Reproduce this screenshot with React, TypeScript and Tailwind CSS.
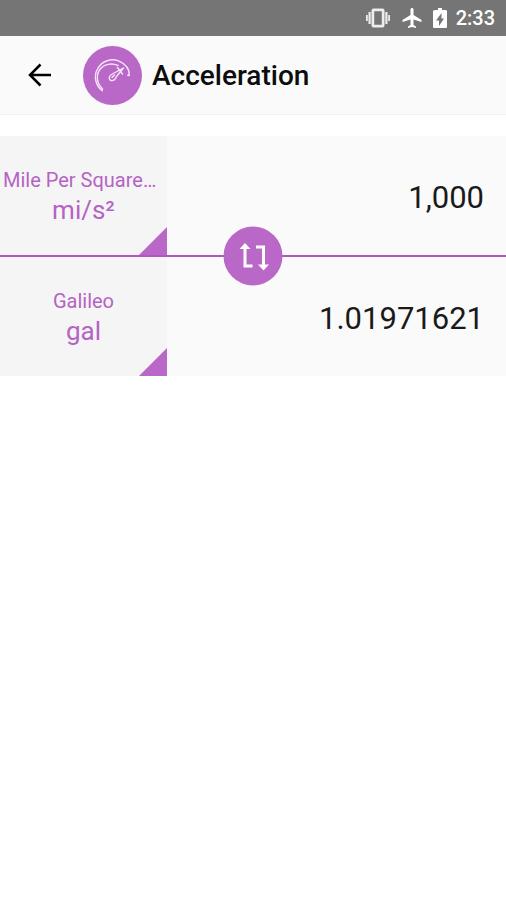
import React from "react";

type Unit = { name: string; symbol: string; clipped?: boolean };

function StatusBar() {
  return (
    <div className="flex h-9 items-center justify-end bg-[#757575] pr-[11px] text-white">
      <svg className="mr-2 h-6 w-7" viewBox="0 0 28 24" fill="#ededed" aria-hidden="true">
        <path
          fillRule="evenodd"
          d="M9.500 2.500h9a2 2 0 0 1 2 2v15a2 2 0 0 1-2 2h-9a2 2 0 0 1-2-2V4.500a2 2 0 0 1 2-2zM10.200 5.300v13.400h7.600V5.300z"
        />
        <path d="M4.500 6h2.200v12H4.500zM21.300 6h2.200v12h-2.200zM2 9h1.800v6H2zM24.200 9H26v6h-1.800z" />
      </svg>
      <svg className="mr-1 h-6 w-6" viewBox="0 0 24 24" fill="currentColor" aria-hidden="true">
        <path d="M21.5 16v-2l-8-5V3.5C13.5 2.67 12.83 2 12 2s-1.5.67-1.5 1.5V9l-8 5v2l8-2.5V19l-2.5 1.5V22l4-1 4 1v-1.5L13.500 19v-5.500z" />
      </svg>
      <svg className="mr-1 h-6 w-6" viewBox="0 0 24 24" fill="currentColor" aria-hidden="true">
        <path
          fillRule="evenodd"
          d="M15.670 4H14V2h-4v2H8.330C7.600 4 5 4 5 5.330v15.330C5 21.400 5.600 22 6.330 22h11.330c.74 0 1.340-.6 1.340-1.330V5.330C19 4.600 18.400 4 17.670 4zM11 20v-5.500H8L13.500 7v5.500H16z"
        />
      </svg>
      <span className="text-xl font-medium leading-6">2:33</span>
    </div>
  );
}

function GaugeIcon() {
  return (
    <svg
      className="h-10 w-10"
      viewBox="0 0 40 40"
      fill="none"
      stroke="#f7e3fa"
      strokeWidth="1.400"
      strokeLinecap="round"
      strokeLinejoin="round"
      aria-hidden="true"
    >
      <path d="M9 35.500C2.500 30.500 0.500 21 4.500 14C9 5.500 18.500 3 26 6.200C32.500 9 36.500 14.500 36.300 20.500L34.700 20.300" />
      <path d="M9 35.500L9.500 34C3.500 28 3 20 6.800 14.500C11 9 18.500 7.500 25 10.500" />
      <path d="M30.500 13L18.500 19.500C15.500 21.500 15.500 24.500 18 25.500C20.500 26 22.500 24 23.500 21.500Z" />
      <path d="M24.500 12.500L29.500 19M21.500 20L19 22.500" />
    </svg>
  );
}

function Header() {
  return (
    <header className="flex h-[79px] items-center border-b border-[#f2f2f2] bg-[#fafafa]">
      <button type="button" aria-label="Back" className="ml-6 flex h-8 w-8 items-center justify-center text-black">
        <svg
          className="h-8 w-8"
          viewBox="0 0 32 32"
          fill="none"
          stroke="currentColor"
          strokeWidth="2.500"
          aria-hidden="true"
        >
          <path d="M27 16H6M16.500 5.500L6 16L16.500 26.500" />
        </svg>
      </button>
      <span className="ml-[27px] flex h-[59px] w-[59px] items-center justify-center rounded-full bg-[#ba68c8]">
        <GaugeIcon />
      </span>
      <h1 className="ml-2.5 pt-0.5 text-[28px] font-medium leading-8 text-[#0d0d0d]">Acceleration</h1>
    </header>
  );
}

function UnitPicker({ unit }: { unit: Unit }) {
  return (
    <button
      type="button"
      aria-haspopup="listbox"
      className="relative flex h-full w-[33%] flex-col items-center justify-center bg-[#f5f5f5] pt-px text-[#b563c4]"
    >
      <span className={`w-full whitespace-nowrap text-xl leading-7 ${unit.clipped ? "pl-[3px] text-left" : "text-center"}`}>
        {unit.name}
      </span>
      <span className="text-[26px] leading-8">{unit.symbol}</span>
      <svg className="absolute bottom-0 right-0 h-7 w-7" viewBox="0 0 28 28" fill="#ba68c8" aria-hidden="true">
        <path d="M28 0V28H0z" />
      </svg>
    </button>
  );
}

const valueClass =
  "min-w-0 flex-1 bg-transparent pr-[22px] pt-1 text-right text-[31px] leading-10 text-[#1a1a1a] outline-none";

export default function App() {
  return (
    <div className="min-h-screen bg-white font-[Roboto,sans-serif]">
      <StatusBar />
      <Header />
      <main className="relative mt-[21px]">
        <div className="flex h-[119px] items-center bg-[#fafafa]">
          <UnitPicker unit={{ name: "Mile Per Square…", symbol: "mi/s²", clipped: true }} />
          <input className={valueClass} aria-label="Value to convert" defaultValue="1,000" inputMode="decimal" />
        </div>
        <div className="h-0.5 bg-[#b453c4]" />
        <div className="flex h-[119px] items-center bg-[#fafafa]">
          <UnitPicker unit={{ name: "Galileo", symbol: "gal" }} />
          <output className={valueClass} aria-label="Converted value">
            1.01971621
          </output>
        </div>
        <button
          type="button"
          aria-label="Swap units"
          className="absolute left-1/2 top-1/2 flex h-[59px] w-[59px] -translate-x-1/2 -translate-y-1/2 items-center justify-center rounded-full bg-[#ba68c8]"
        >
          <svg className="h-8 w-8" viewBox="0 0 32 32" fill="none" stroke="white" strokeWidth="3" aria-hidden="true">
            <path d="M7.500 7V25.500H15M18.500 6.500H26V25" />
            <path d="M2 8.500L7.500 2.500L13 8.500zM20.500 24L26 30L31.500 24z" fill="white" stroke="none" />
          </svg>
        </button>
      </main>
    </div>
  );
}
